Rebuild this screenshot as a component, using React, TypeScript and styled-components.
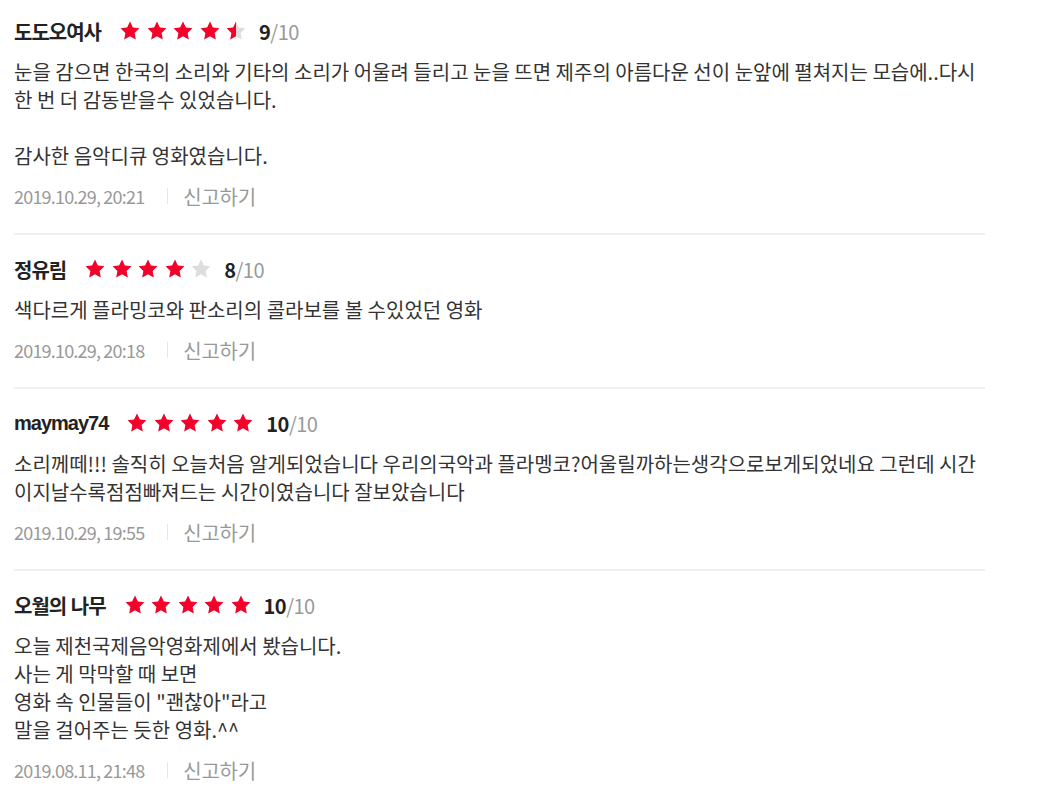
import styled, { createGlobalStyle } from 'styled-components'

const GlobalStyle = createGlobalStyle`
  body {
    margin: 0;
    background: #fff;
    font-family: 'Noto Sans CJK KR', 'Noto Sans', sans-serif;
    color: #333;
  }
`

const StyledList = styled.div`
  width: 971px;
  padding: 0 14px;
`

const StyledReview = styled.div`
  padding: 20px 0 23px;
  border-bottom: 2px solid #f0f0f0;

  &:first-child {
    padding-top: 17px;
  }

  &:last-child {
    border-bottom: none;
  }
`

const StyledHeader = styled.div`
  display: flex;
  align-items: center;
  height: 28px;
`

const StyledName = styled.span`
  font-family: 'Liberation Sans', 'Noto Sans CJK KR', sans-serif;
  font-size: 20px;
  font-weight: 700;
  color: #222;
  letter-spacing: -1px;
  margin-right: 18px;
`

const StyledStars = styled.div`
  display: flex;
  gap: 4.5px;
  margin-right: 12px;
`

const StyledScore = styled.span`
  font-size: 20px;
  font-weight: 700;
  color: #222;
  letter-spacing: -0.5px;

  span {
    font-weight: 400;
    color: #999;
  }
`

const StyledBody = styled.p`
  margin: 13px 0 0;
  font-size: 20px;
  line-height: 28px;
  color: #333;
  white-space: pre;
`

const StyledMeta = styled.div`
  display: flex;
  align-items: center;
  height: 28px;
  margin-top: 12px;
  color: #999;
`

const StyledDate = styled.span`
  font-size: 18px;
  letter-spacing: -0.8px;
`

const StyledBar = styled.i`
  width: 1px;
  height: 16px;
  background: #e6e6e6;
  margin: 0 15px 0 23px;
`

const StyledReport = styled.span`
  font-size: 20px;
  letter-spacing: -0.3px;
  color: #999;
`

const STAR = 'M12 1.6l3.1 6.6 7.1 0.9-5.2 5 1.3 7.1L12 17.7l-6.3 3.5 1.3-7.1-5.2-5 7.1-0.9z'

const Star = ({ fill }: { fill: number }) => (
  <svg width="22" height="22" viewBox="0 0 24 24">
    <defs>
      <clipPath id={`half-${fill}`}>
        <rect x="0" y="0" width={24 * fill} height="24" />
      </clipPath>
    </defs>
    <path d={STAR} fill="#dddddd" />
    {fill > 0 && <path d={STAR} fill="#f5002a" clipPath={`url(#half-${fill})`} />}
  </svg>
)

const Rating = ({ score }: { score: number }) => (
  <StyledStars>
    {[0, 1, 2, 3, 4].map((i) => {
      const v = Math.max(0, Math.min(1, score / 2 - i))
      return <Star key={i} fill={v} />
    })}
  </StyledStars>
)

const reviews = [
  {
    name: '도도오여사',
    score: 9,
    text: '눈을 감으면 한국의 소리와 기타의 소리가 어울려 들리고 눈을 뜨면 제주의 아름다운 선이 눈앞에 펼쳐지는 모습에..다시\n한 번 더 감동받을수 있었습니다.\n\n감사한 음악디큐 영화였습니다.',
    date: '2019.10.29, 20:21',
  },
  {
    name: '정유림',
    score: 8,
    text: '색다르게 플라밍코와 판소리의 콜라보를 볼 수있었던 영화',
    date: '2019.10.29, 20:18',
  },
  {
    name: 'maymay74',
    score: 10,
    text: '소리께떼!!! 솔직히 오늘처음 알게되었습니다 우리의국악과 플라멩코?어울릴까하는생각으로보게되었네요 그런데 시간\n이지날수록점점빠져드는 시간이였습니다 잘보았습니다',
    date: '2019.10.29, 19:55',
  },
  {
    name: '오월의 나무',
    score: 10,
    text: '오늘 제천국제음악영화제에서 봤습니다.\n사는 게 막막할 때 보면\n영화 속 인물들이 "괜찮아"라고\n말을 걸어주는 듯한 영화.^^',
    date: '2019.08.11, 21:48',
  },
]

export default function App() {
  return (
    <>
      <GlobalStyle />
      <StyledList>
        {reviews.map((r) => (
          <StyledReview key={r.name}>
            <StyledHeader>
              <StyledName>{r.name}</StyledName>
              <Rating score={r.score} />
              <StyledScore>
                {r.score}
                <span>/10</span>
              </StyledScore>
            </StyledHeader>
            <StyledBody>{r.text}</StyledBody>
            <StyledMeta>
              <StyledDate>{r.date}</StyledDate>
              <StyledBar />
              <StyledReport>신고하기</StyledReport>
            </StyledMeta>
          </StyledReview>
        ))}
      </StyledList>
    </>
  )
}
